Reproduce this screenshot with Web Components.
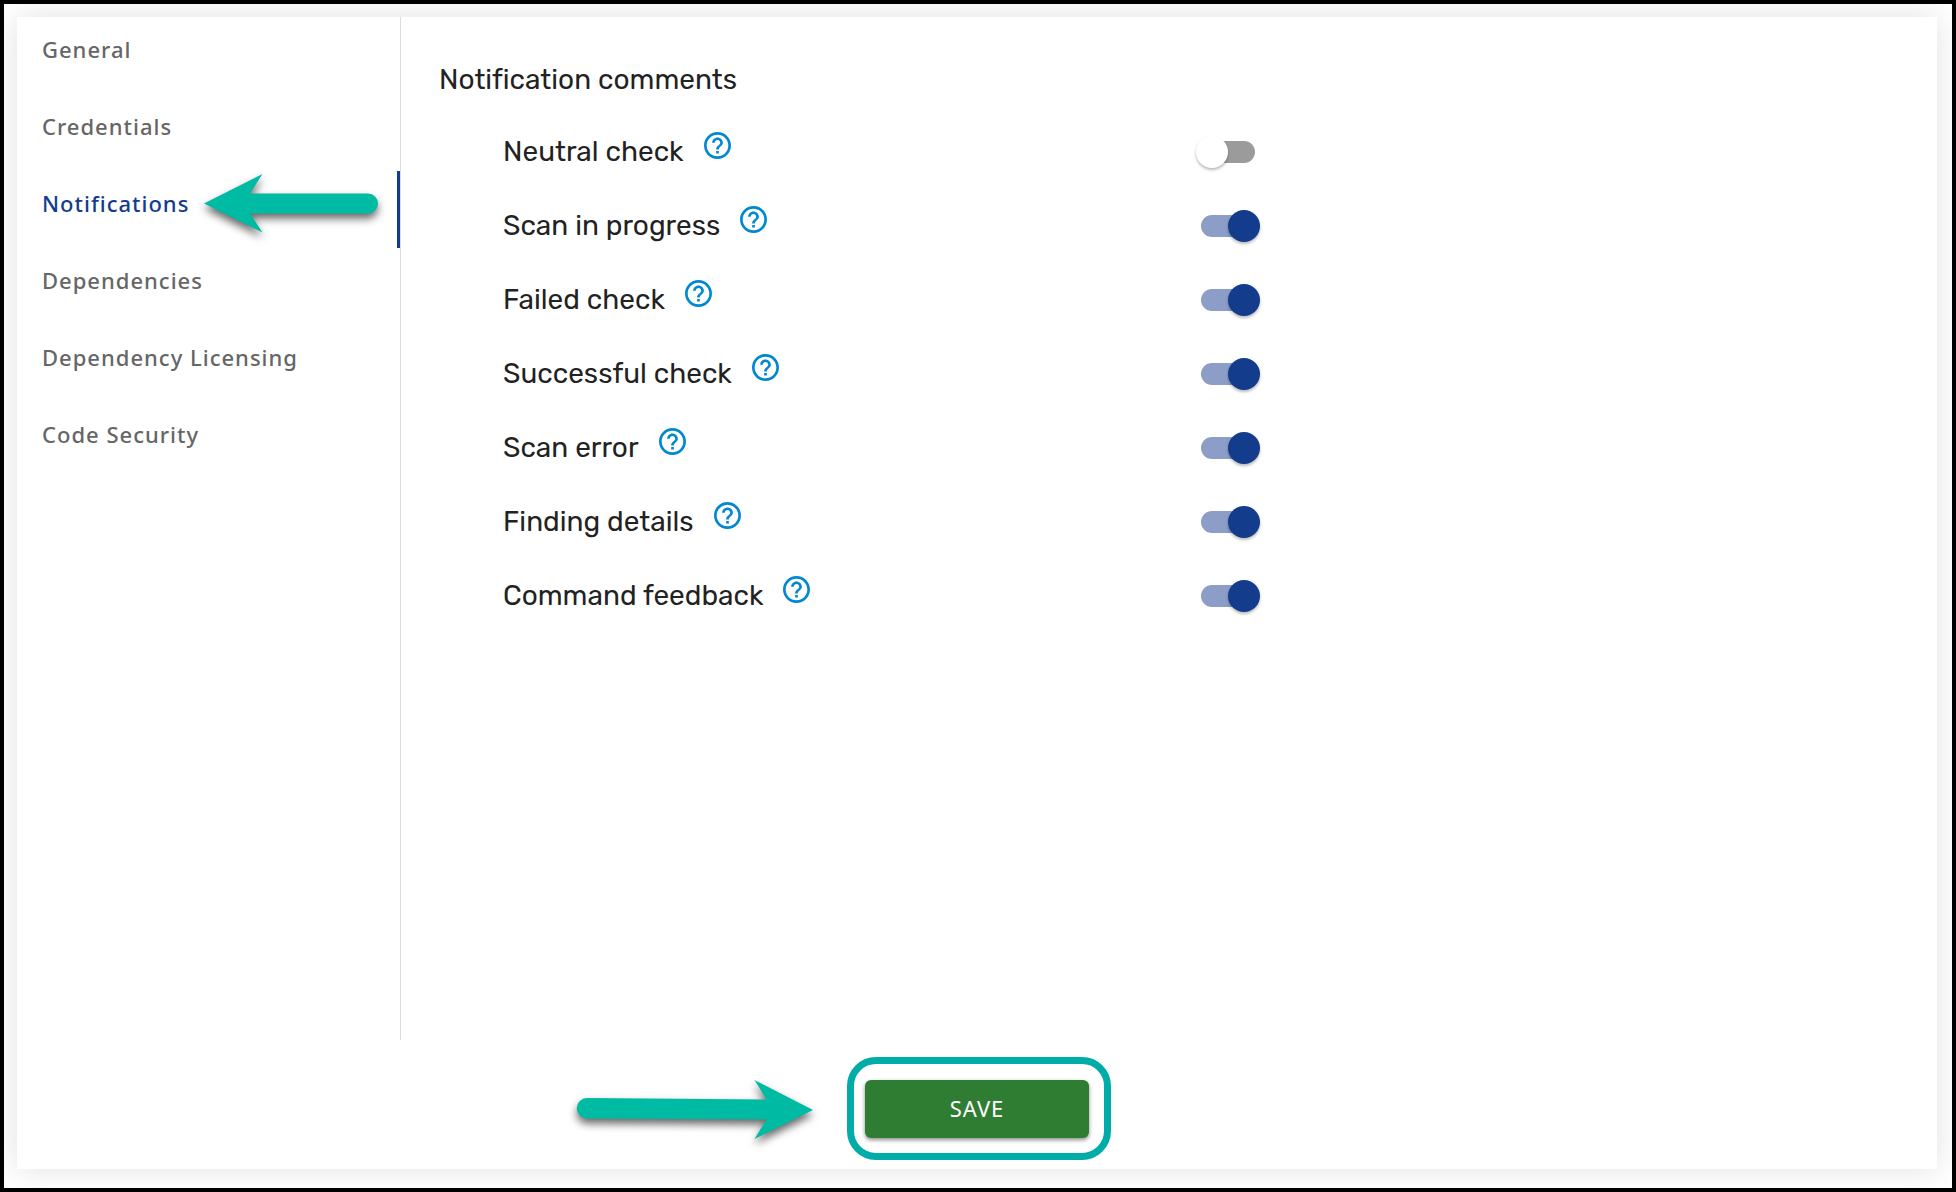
<!DOCTYPE html>
<html lang="en">
<head>
<meta charset="utf-8">
<title>Notification settings</title>
<style>
  html {
    height: 100%;
  }
  body {
    margin: 0;
    min-height: 100%;
    display: flex;
    font-family: "Noto Sans", sans-serif;
    color: #222;
  }
</style>
</head>
<body>
<settings-page>
  <settings-nav slot="nav">
    <nav-item>General</nav-item>
    <nav-item>Credentials</nav-item>
    <nav-item active>Notifications<pointer-arrow slot="marker" direction="left"></pointer-arrow></nav-item>
    <nav-item>Dependencies</nav-item>
    <nav-item>Dependency Licensing</nav-item>
    <nav-item>Code Security</nav-item>
  </settings-nav>
  <settings-group heading="Notification comments">
    <toggle-row label="Neutral check"></toggle-row>
    <toggle-row label="Scan in progress" checked></toggle-row>
    <toggle-row label="Failed check" checked></toggle-row>
    <toggle-row label="Successful check" checked></toggle-row>
    <toggle-row label="Scan error" checked></toggle-row>
    <toggle-row label="Finding details" checked></toggle-row>
    <toggle-row label="Command feedback" checked></toggle-row>
  </settings-group>
  <save-button slot="footer">SAVE<pointer-arrow slot="marker" direction="right"></pointer-arrow></save-button>
</settings-page>

<script>
class SettingsPage extends HTMLElement {
  constructor() {
    super();
    this.attachShadow({mode: 'open'}).innerHTML = `
      <style>
        :host {
          flex: 1;
          display: flex;
          box-sizing: border-box;
          border: 4px solid #000;
          padding: 13px 15px 19px 13px;
          overflow: hidden;
        }
        #card {
          flex: 1;
          display: flex;
          flex-direction: column;
          background: #fff;
          box-shadow: 0 0 30px rgba(0, 0, 0, 0.12);
        }
        #columns {
          flex: 1;
          display: grid;
          grid-template-columns: 1fr 4fr;
        }
        footer {
          display: flex;
          justify-content: center;
          padding: 17px 0 9px 4px;
        }
      </style>
      <div id="card">
        <div id="columns">
          <slot name="nav"></slot>
          <main><slot></slot></main>
        </div>
        <footer><slot name="footer"></slot></footer>
      </div>`;
  }
}

class SettingsNav extends HTMLElement {
  constructor() {
    super();
    this.attachShadow({mode: 'open'}).innerHTML = `
      <style>
        :host {
          display: block;
          border-right: 1px solid #dcdcdc;
        }
        nav {
          display: flex;
          flex-direction: column;
        }
      </style>
      <nav><slot></slot></nav>`;
  }
}

class NavItem extends HTMLElement {
  constructor() {
    super();
    this.attachShadow({mode: 'open'}).innerHTML = `
      <style>
        :host {
          display: flex;
          align-items: flex-start;
          gap: 15px;
          height: 77px;
          box-sizing: border-box;
          padding: 16px 0 0 25px;
          border-right: 3px solid transparent;
        }
        :host([active]) {
          border-color: #143c8c;
        }
        a {
          font-size: 22px;
          font-weight: 500;
          line-height: 32px;
          letter-spacing: 1px;
          color: #666;
          text-decoration: none;
          white-space: nowrap;
        }
        :host([active]) a {
          color: #143c8c;
        }
      </style>
      <a href="#"><slot></slot></a>
      <slot name="marker"></slot>`;
    if (this.hasAttribute('active')) {
      this.shadowRoot.querySelector('a').setAttribute('aria-current', 'page');
    }
  }
}

class SettingsGroup extends HTMLElement {
  constructor() {
    super();
    this.attachShadow({mode: 'open'}).innerHTML = `
      <style>
        :host {
          display: block;
          padding: 42px 38px 0;
        }
        h2 {
          margin: 0 0 14px;
          font: 400 28px/42px Rubik, Inter, sans-serif;
          font-variant-ligatures: none;
        }
        #rows {
          display: flex;
          flex-direction: column;
          padding-left: 64px;
        }
      </style>
      <h2></h2>
      <div id="rows"><slot></slot></div>`;
    this.shadowRoot.querySelector('h2').textContent = this.getAttribute('heading');
  }
}

class ToggleRow extends HTMLElement {
  constructor() {
    super();
    this.attachShadow({mode: 'open'}).innerHTML = `
      <style>
        :host {
          display: grid;
          grid-template-columns: 1fr 1fr;
          align-items: center;
          height: 74px;
        }
        #name {
          display: flex;
          align-items: center;
          gap: 20px;
        }
        label {
          font: 400 28px/42px Rubik, Inter, sans-serif;
          font-variant-ligatures: none;
        }
        button {
          display: flex;
          padding: 0 0 13px;
          border: 0;
          background: none;
        }
        input {
          appearance: none;
          display: flex;
          align-items: center;
          width: 54px;
          height: 22px;
          margin: 0;
          border-radius: 11px;
          background: #9b9b9b;
        }
        input::before {
          content: "";
          flex: none;
          width: 32px;
          height: 32px;
          margin-left: -5px;
          border-radius: 50%;
          background: #fff;
          box-shadow: 0 2px 3px rgba(0, 0, 0, 0.28);
        }
        input:checked {
          background: #8c9dc8;
        }
        input:checked::before {
          margin-left: 27px;
          background: #143c8c;
        }
      </style>
      <div id="name">
        <label for="toggle"></label>
        <button type="button" aria-label="Help">
          <svg width="27" height="27" viewBox="2 2 20 20" fill="#0288d1">
            <path d="M11 18h2v-2h-2v2zm1-16C6.480 2 2 6.480 2 12s4.480 10 10 10 10-4.480 10-10S17.520 2 12 2zm0 18c-4.410 0-8-3.590-8-8s3.590-8 8-8 8 3.590 8 8-3.590 8-8 8zm0-14c-2.210 0-4 1.790-4 4h2c0-1.100.9-2 2-2s2 .9 2 2c0 2-3 1.750-3 5h2c0-2.250 3-2.500 3-5 0-2.210-1.790-4-4-4z"/>
          </svg>
        </button>
      </div>
      <input id="toggle" type="checkbox" role="switch">`;
    this.shadowRoot.querySelector('label').textContent = this.getAttribute('label');
    this.shadowRoot.getElementById('toggle').checked = this.hasAttribute('checked');
  }
}

class SaveButton extends HTMLElement {
  constructor() {
    super();
    this.attachShadow({mode: 'open'}).innerHTML = `
      <style>
        :host {
          display: block;
          position: relative;
          padding: 16px 15px 15px 11px;
          border: 7px solid #00aca8;
          border-radius: 29px;
        }
        button {
          display: block;
          width: 224px;
          height: 58px;
          padding: 0 0 2px;
          border: 0;
          border-radius: 6px;
          background: #2f7d32;
          color: #fff;
          font: 400 22px/32px "Noto Sans", sans-serif;
          letter-spacing: 1px;
          box-shadow: 0 2px 4px rgba(0, 0, 0, 0.45);
        }
        ::slotted([slot="marker"]) {
          position: absolute;
          top: 29px;
          right: calc(100% + 41px);
        }
      </style>
      <button type="submit"><slot></slot></button>
      <slot name="marker"></slot>`;
  }
}

class PointerArrow extends HTMLElement {
  constructor() {
    super();
    const left = this.getAttribute('direction') === 'left';
    const svg = left
      ? `<svg width="174" height="60" viewBox="0 0 174 60"><path d="M0 29.500 58.500 0 46 19.500H164a10 10 0 0 1 0 20H46L58.500 58.500Z"/></svg>`
      : `<svg width="236" height="60" viewBox="0 0 236 60"><path d="M10 18 189.500 19.500 177.500 0 236 30 177.500 59 189.500 39.500 10 38.500A10 10 0 0 1 10 18Z"/></svg>`;
    this.attachShadow({mode: 'open'}).innerHTML = `
      <style>
        :host {
          display: block;
          height: 32px;
        }
        svg {
          display: block;
          margin-top: -13px;
          overflow: visible;
          fill: #00bba3;
          filter: drop-shadow(0 5px 4px rgba(0, 0, 0, 0.6));
        }
      </style>
      ${svg}`;
  }
}

customElements.define('settings-page', SettingsPage);
customElements.define('settings-nav', SettingsNav);
customElements.define('nav-item', NavItem);
customElements.define('settings-group', SettingsGroup);
customElements.define('toggle-row', ToggleRow);
customElements.define('save-button', SaveButton);
customElements.define('pointer-arrow', PointerArrow);
</script>
</body>
</html>
